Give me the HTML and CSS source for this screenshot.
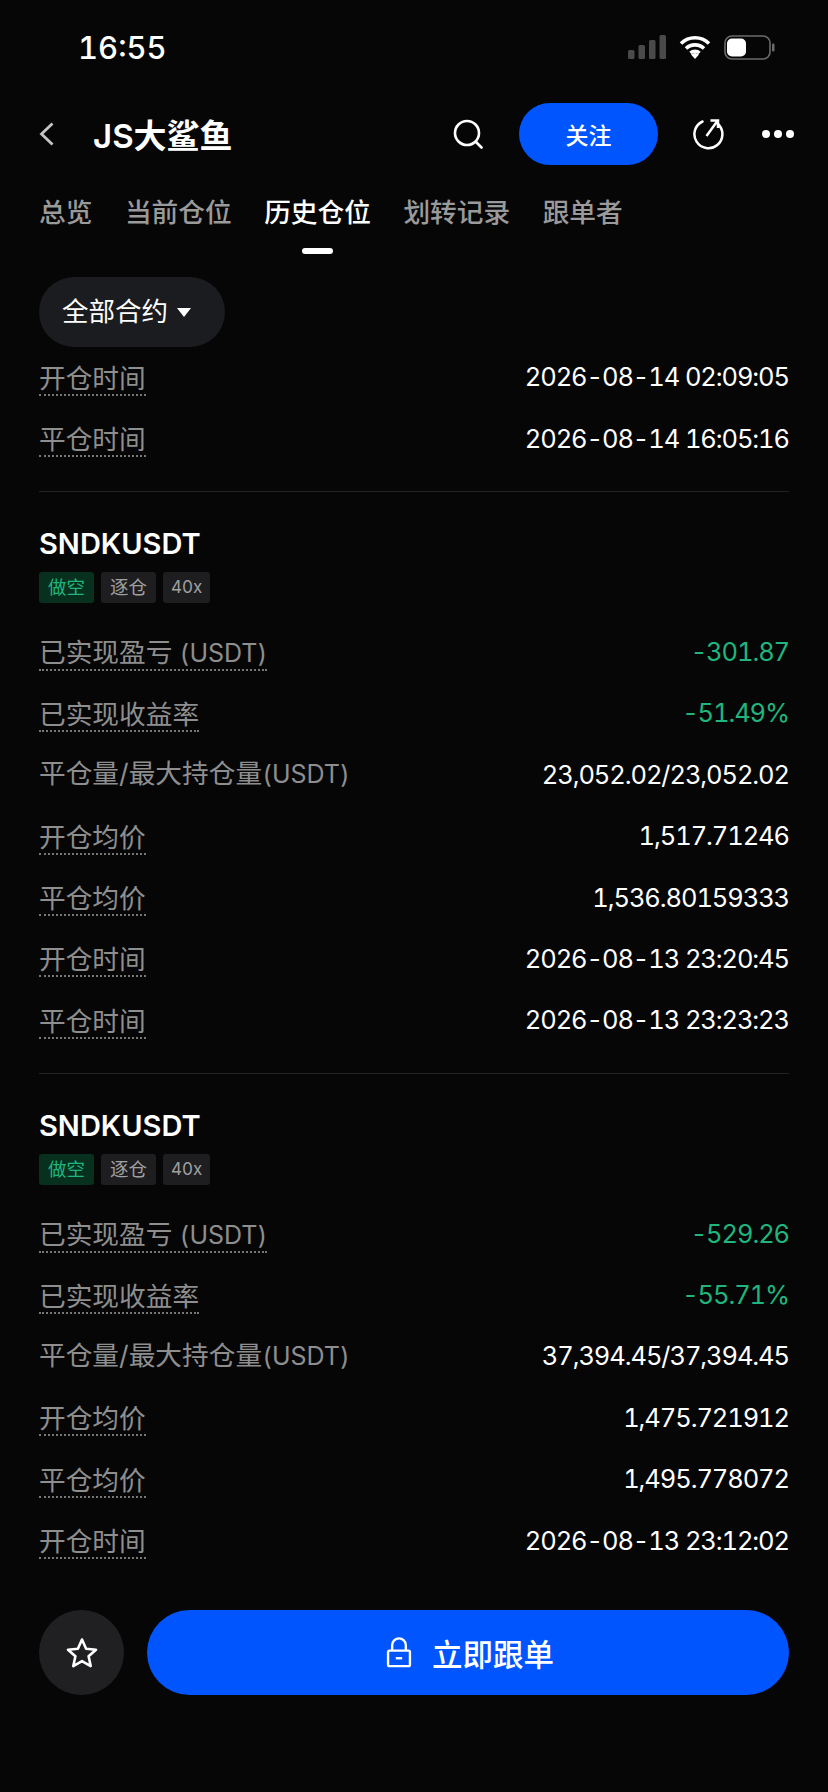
FILE: index.html
```html
<!DOCTYPE html>
<html lang="zh-CN">
<head>
    <meta charset="UTF-8">
    <meta name="viewport" content="width=device-width, initial-scale=1.0">
    <title>JS大鲨鱼 - 历史仓位</title>
    <link rel="stylesheet" href="styles.css">
</head>
<body>
    <div class="app">
        <div class="status-bar">
            <span class="clock">16:55</span>
            <div class="status-icons">
                <svg width="38" height="24" viewBox="0 0 38 24"><g fill="#4a4a4a"><rect x="0" y="15" width="6.500" height="9" rx="1.500"/><rect x="10.500" y="10" width="6.500" height="14" rx="1.500"/><rect x="21" y="5" width="6.500" height="19" rx="1.500"/><rect x="31.500" y="0" width="6.500" height="24" rx="1.500"/></g></svg>
                <svg width="32" height="24" viewBox="0 0 32 24"><path d="M2 8.500a20 20 0 0 1 28 0M7 13.500a13 13 0 0 1 18 0M11.500 18a6.500 6.500 0 0 1 9 0" fill="none" stroke="#fff" stroke-width="3.600"/><path d="M16 24l-4-4.500a6 6 0 0 1 8 0z" fill="#fff"/></svg>
                <svg width="51" height="25" viewBox="0 0 51 25"><rect x="1" y="1" width="45" height="23" rx="7" fill="none" stroke="#6b6b6b" stroke-width="1.600"/><rect x="3" y="3.500" width="19" height="18" rx="5" fill="#fff"/><rect x="48" y="8.500" width="2.500" height="8" rx="1.200" fill="#6b6b6b"/></svg>
            </div>
        </div>

        <div class="nav">
            <svg class="back" width="15" height="24" viewBox="0 0 15 24"><path d="M13.500 1.500L2.500 12l11 10.500" fill="none" stroke="#c4c4c4" stroke-width="2.800"/></svg>
            <h1>JS大鲨鱼</h1>
            <svg class="search" width="30" height="30" viewBox="0 0 30 30"><circle cx="14" cy="14" r="12" fill="none" stroke="#fff" stroke-width="2.600"/><path d="M23 23l5.500 5.500" stroke="#fff" stroke-width="2.600" stroke-linecap="round"/></svg>
            <button class="follow">关注</button>
            <svg class="share" width="32" height="32" viewBox="0 0 32 32"><path d="M10.500 3.500a14 14 0 1 0 15.500 2.500" fill="none" stroke="#fff" stroke-width="2.500" stroke-linecap="round"/><path d="M14.500 18L25 3.500M18.500 2.500h7.500v7.500" fill="none" stroke="#fff" stroke-width="2.500"/></svg>
            <div class="more"><i></i><i></i><i></i></div>
        </div>

        <div class="tabs">
            <a href="#">总览</a>
            <a href="#">当前仓位</a>
            <a href="#" class="active">历史仓位</a>
            <a href="#">划转记录</a>
            <a href="#">跟单者</a>
        </div>

        <div class="filter-wrap">
            <div class="filter"><span class="filter-text">全部合约</span><span class="caret"></span></div>
        </div>

        <div class="list">
            <div class="card first">
                <div class="row"><span class="label">开仓时间</span><span class="value">2026-08-14 02:09:05</span></div>
                <div class="row"><span class="label">平仓时间</span><span class="value">2026-08-14 16:05:16</span></div>
            </div>

            <div class="card">
                <div class="symbol">SNDKUSDT</div>
                <div class="tags"><span class="tag short">做空</span><span class="tag">逐仓</span><span class="tag lev">40x</span></div>
                <div class="row"><span class="label">已实现盈亏 <span class="unit">(USDT)</span></span><span class="value green">-301.87</span></div>
                <div class="row"><span class="label">已实现收益率</span><span class="value green">-51.49%</span></div>
                <div class="row"><span class="label plain">平仓量/最大持仓量<span class="unit">(USDT)</span></span><span class="value">23,052.02/23,052.02</span></div>
                <div class="row"><span class="label">开仓均价</span><span class="value">1,517.71246</span></div>
                <div class="row"><span class="label">平仓均价</span><span class="value">1,536.80159333</span></div>
                <div class="row"><span class="label">开仓时间</span><span class="value">2026-08-13 23:20:45</span></div>
                <div class="row"><span class="label">平仓时间</span><span class="value">2026-08-13 23:23:23</span></div>
            </div>

            <div class="card last">
                <div class="symbol">SNDKUSDT</div>
                <div class="tags"><span class="tag short">做空</span><span class="tag">逐仓</span><span class="tag lev">40x</span></div>
                <div class="row"><span class="label">已实现盈亏 <span class="unit">(USDT)</span></span><span class="value green">-529.26</span></div>
                <div class="row"><span class="label">已实现收益率</span><span class="value green">-55.71%</span></div>
                <div class="row"><span class="label plain">平仓量/最大持仓量<span class="unit">(USDT)</span></span><span class="value">37,394.45/37,394.45</span></div>
                <div class="row"><span class="label">开仓均价</span><span class="value">1,475.721912</span></div>
                <div class="row"><span class="label">平仓均价</span><span class="value">1,495.778072</span></div>
                <div class="row"><span class="label">开仓时间</span><span class="value">2026-08-13 23:12:02</span></div>
            </div>
        </div>

        <div class="bottom-bar">
            <button class="star-btn">
                <svg width="34" height="34" viewBox="0 0 34 34"><path d="M17 3.500l4.100 9.200 9.900 1-7.400 6.600 2.100 9.800-8.700-5-8.700 5 2.100-9.800L3 13.700l9.900-1z" fill="none" stroke="#fff" stroke-width="2.600" stroke-linejoin="round"/></svg>
            </button>
            <button class="copy-btn">
                <svg width="26" height="31" viewBox="0 0 28 34"><path d="M6.500 15V9a7.500 7.500 0 0 1 15 0v6" fill="none" stroke="#fff" stroke-width="2.600"/><rect x="2" y="15" width="24" height="17" rx="1.500" fill="none" stroke="#fff" stroke-width="2.600"/><rect x="10.500" y="22" width="7" height="2.600" fill="#fff"/></svg>
                立即跟单
            </button>
        </div>
    </div>
</body>
</html>
```

FILE: styles.css
```css
body {
    margin: 0;
    background: #060607;
    color: white;
    font-family: Inter, "Liberation Sans", "Noto Sans CJK SC", sans-serif;
    font-variant-numeric: tabular-nums;
}
.app {
    width: 828px;
    height: 1792px;
    display: flex;
    flex-direction: column;
    overflow: hidden;
    position: relative;
}
.status-bar {
    height: 94px;
    display: flex;
    justify-content: space-between;
    align-items: center;
    padding: 0 53px 0 78px;
    flex-shrink: 0;
}
.clock {
    font-size: 31px;
    font-weight: 500;
}
.status-icons {
    display: flex;
    align-items: center;
    gap: 13px;
}
.nav {
    height: 80px;
    display: flex;
    align-items: center;
    padding: 0 34px 0 39px;
    flex-shrink: 0;
}
.nav h1 {
    margin: 0 0 0 39px;
    font-size: 33px;
    font-weight: 600;
    flex: 1;
}
.follow {
    width: 139px;
    height: 62px;
    margin: 0 34px 0 36px;
    border: none;
    border-radius: 31px;
    background: #0055ff;
    color: white;
    font-family: inherit;
    font-size: 23px;
    font-weight: 500;
}
.more {
    display: flex;
    gap: 4px;
    margin-left: 38px;
}
.more i {
    width: 8px;
    height: 8px;
    border-radius: 50%;
    background: white;
}
.tabs {
    display: flex;
    gap: 32.500px;
    padding: 0 39px;
    height: 80px;
    flex-shrink: 0;
    box-sizing: border-box;
}
.tabs a {
    position: relative;
    color: #9a9a9a;
    text-decoration: none;
    font-size: 26.700px;
    font-weight: 500;
    line-height: 76px;
}
.tabs a.active {
    color: white;
}
.tabs a.active::after {
    content: "";
    position: absolute;
    left: 38px;
    top: 74px;
    width: 31px;
    height: 6px;
    border-radius: 3px;
    background: white;
}
.filter-wrap {
    padding: 23px 39px 0;
    flex-shrink: 0;
}
.filter {
    width: 186px;
    height: 70px;
    box-sizing: border-box;
    display: flex;
    align-items: center;
    padding-left: 23px;
    gap: 9px;
    border-radius: 35px;
    background: #1b1c20;
}
.filter-text {
    font-size: 26.500px;
    margin-bottom: 5px;
}
.caret {
    width: 0;
    height: 0;
    border-left: 7px solid transparent;
    border-right: 7px solid transparent;
    border-top: 9px solid white;
}
.list {
    flex: 1;
    padding: 0 39px;
}
.card {
    border-bottom: 1px solid #232325;
    padding: 32px 0 22px;
}
.card.first {
    margin-top: -1px;
    padding: 0 0 22px;
}
.card.last {
    border-bottom: none;
}
.symbol {
    font-size: 29px;
    font-weight: 600;
    line-height: 40px;
}
.tags {
    display: flex;
    gap: 7px;
    margin-top: 8px;
    margin-bottom: 18px;
}
.tag {
    height: 31px;
    line-height: 31px;
    padding: 0 9px;
    border-radius: 3px;
    background: #1e1e20;
    color: #a0a0a0;
    font-size: 18.500px;
}
.tag.lev {
    padding: 0 8px;
    font-size: 17px;
}
.tag.short {
    background: #07301f;
    color: #1fb57d;
}
.row {
    height: 61.400px;
    display: flex;
    justify-content: space-between;
    align-items: center;
}
.label {
    margin-top: 5px;
    color: #8e8e8e;
    font-size: 26.700px;
    line-height: 31px;
    border-bottom: 2px dotted #777;
}
.label.plain {
    margin-top: 0;
    border-bottom: none;
}
.unit {
    font-size: 25px;
}
.value {
    font-size: 25.500px;
    letter-spacing: -1.100px;
}
.green {
    color: #1fb57d;
}
.bottom-bar {
    position: absolute;
    left: 0;
    right: 0;
    bottom: 0;
    height: 212px;
    box-sizing: border-box;
    padding: 30px 39px 0;
    display: flex;
    gap: 23px;
    background: #060607;
}
.star-btn {
    width: 85px;
    height: 85px;
    border: none;
    border-radius: 50%;
    background: #202022;
    display: flex;
    align-items: center;
    justify-content: center;
}
.copy-btn {
    flex: 1;
    height: 85px;
    border: none;
    border-radius: 43px;
    padding-left: 10px;
    background: #0055ff;
    color: white;
    font-family: inherit;
    font-size: 30.500px;
    font-weight: 500;
    display: flex;
    align-items: center;
    justify-content: center;
    gap: 20px;
}
```
